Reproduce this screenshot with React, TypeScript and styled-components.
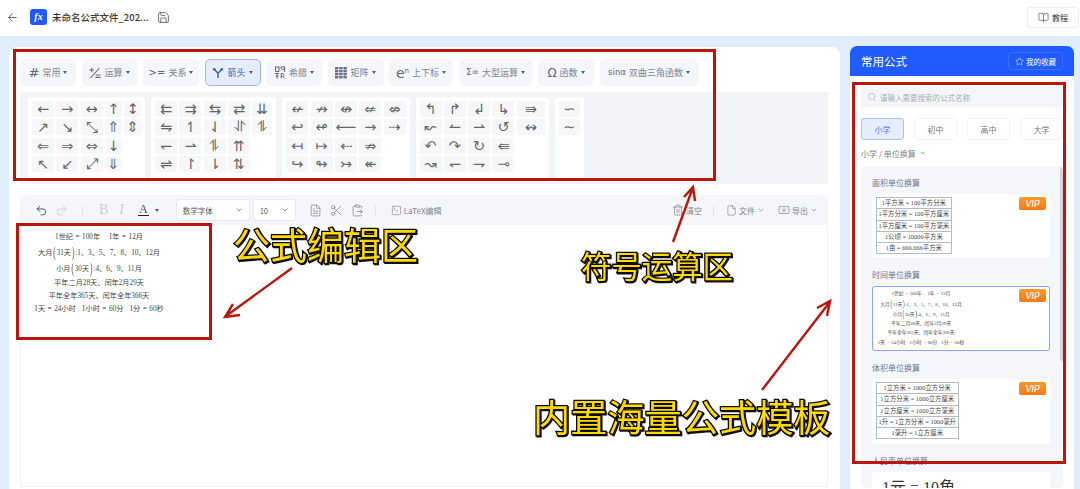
import React from "react";
import styled, { createGlobalStyle } from "styled-components";
import {
  ArrowLeft, Save, BookOpen, Star, Search, ChevronDown, Undo2, Redo2, FileText,
  Scissors, ClipboardPaste, SquareTerminal, Trash2, File, Import,
} from "lucide-react";

const UI = `"Noto Sans CJK SC", "Inter", sans-serif`;
const MATH = `"Liberation Serif", "Noto Sans CJK SC", serif`;

const Global = createGlobalStyle`
  html, body { margin: 0; padding: 0; background: #fff; }
  body { width: 1080px; height: 489px; overflow: hidden; font-family: ${UI}; }
  * { box-sizing: border-box; }
`;

const Page = styled.div`
  position: relative;
  width: 1080px;
  height: 489px;
  overflow: hidden;
  background: #e0eefc;
  display: flex;
  flex-direction: column;
`;

/* ---------- top bar ---------- */
const TopBar = styled.header`
  height: 36px;
  flex: none;
  background: #fff;
  display: flex;
  align-items: center;
  padding: 0 1px 2px 6px;
  color: #555;
`;
const Logo = styled.div`
  width: 17px;
  height: 16px;
  margin-left: 11px;
  border-radius: 3px;
  background: #1f5bff;
  color: #fff;
  font: italic 700 10px/16px "Liberation Serif", serif;
  text-align: center;
`;
const FileName = styled.div`
  margin-left: 5px;
  width: 105px;
  font-size: 9.5px;
  font-weight: 500;
  color: #3a3a3a;
  white-space: nowrap;
`;
const HelpButton = styled.button`
  margin-left: auto;
  width: 52px;
  height: 21px;
  border: 1px solid #eceef2;
  border-radius: 3px;
  background: #fff;
  color: #555;
  font: 500 8px ${UI};
  display: flex;
  align-items: center;
  justify-content: center;
  gap: 3px;
  padding: 0;
`;

/* ---------- main ---------- */
const Main = styled.main`
  flex: 1;
  min-height: 0;
  display: flex;
  gap: 10px;
  padding: 11px 6px 0 9px;
`;
const LeftPanel = styled.section`
  flex: 1;
  min-width: 0;
  background: #fff;
  border-radius: 8px 8px 0 0;
  padding: 12px 12px 2px 11px;
  display: flex;
  flex-direction: column;
`;
const Tabs = styled.div`
  display: flex;
  gap: 5.5px;
  height: 27px;
  flex: none;
`;
const Tab = styled.div<{ $w: number; $active?: boolean }>`
  width: ${(p) => p.$w}px;
  border-radius: 5px;
  background: ${(p) => (p.$active ? "#e6edff" : "#f5f6f9")};
  border: 1px solid ${(p) => (p.$active ? "#9db6fb" : "#f5f6f9")};
  color: ${(p) => (p.$active ? "#3d5fae" : "#7f8494")};
  font-size: 9px;
  display: flex;
  align-items: center;
  justify-content: center;
  gap: 3px;
  white-space: nowrap;
`;
const TabGlyph = styled.span<{ $size?: number }>`
  font: ${(p) => p.$size ?? 11}px "DejaVu Sans", sans-serif;
  color: #5f6579;
  line-height: 1;
  sup { font-size: 0.5em; vertical-align: 0.7em; line-height: 0; }
`;
const Caret = styled.i<{ $gap?: number }>`
  width: 0;
  height: 0;
  margin-left: ${(p) => p.$gap ?? 0}px;
  border-left: 2.5px solid transparent;
  border-right: 2.5px solid transparent;
  border-top: 3px solid #555b70;
`;
const Symbols = styled.div`
  margin-top: 6px;
  height: 92px;
  flex: none;
  background: #f2f4f8;
  padding: 5px 8px 0;
  display: flex;
  gap: 6px;
  overflow: hidden;
`;
const SymbolGroup = styled.div<{ $cols: string }>`
  background: #fff;
  border-radius: 3px;
  height: 84px;
  padding: 4px;
  display: grid;
  grid-template-columns: ${(p) => p.$cols};
  grid-auto-rows: 16px;
  gap: 2.3px;
`;
const SymbolCell = styled.span`
  background: #f6f7f9;
  border-radius: 2px;
  color: #666;
  font: 14.5px/16px "DejaVu Sans", sans-serif;
  text-align: center;
  overflow: hidden;
`;

/* ---------- editor ---------- */
const EditorBar = styled.div`
  margin-top: 11px;
  height: 30px;
  flex: none;
  background: #f4f6fa;
  border-radius: 6px 6px 0 0;
  display: flex;
  align-items: center;
  padding: 0 10px 0 15px;
  color: #7d8391;
`;
const ToolIcon = styled.span<{ $gap?: number; $dim?: boolean }>`
  margin-left: ${(p) => p.$gap ?? 0}px;
  display: inline-flex;
  color: ${(p) => (p.$dim ? "#c4c8d0" : "#7d8391")};
`;
const StyleLetter = styled.span<{ $gap: number; $italic?: boolean }>`
  margin-left: ${(p) => p.$gap}px;
  font: ${(p) => (p.$italic ? "italic" : "normal")} 400 14px "Liberation Serif", serif;
  color: #c9ccd3;
`;
const ColorLetter = styled.span`
  margin-left: 14px;
  font: 400 12px/11px "Liberation Serif", serif;
  color: #44506e;
  border-bottom: 1.5px solid #222;
  padding: 0 1px;
`;
const Divider = styled.i<{ $gap: number }>`
  margin-left: ${(p) => p.$gap}px;
  width: 1px;
  height: 9px;
  background: #dfe2e8;
`;
const SelectBox = styled.div<{ $w: number; $gap: number }>`
  margin-left: ${(p) => p.$gap}px;
  width: ${(p) => p.$w}px;
  height: 22px;
  background: #fff;
  border: 1px solid #e7e9ee;
  border-radius: 3px;
  display: flex;
  align-items: center;
  justify-content: space-between;
  padding: 0 6px;
  font-size: 7.5px;
  color: #555;
`;
const BarLabel = styled.span<{ $gap?: number }>`
  margin-left: ${(p) => p.$gap ?? 2}px;
  font-size: 8px;
  color: #7d8391;
  white-space: nowrap;
`;
const BarRight = styled.div`
  margin-left: auto;
  display: flex;
  align-items: center;
`;
const EditorBody = styled.div`
  flex: 1;
  min-height: 0;
  border: 1px solid #f0f1f4;
  border-top: 0;
  padding: 5px 0 0 8px;
`;

/* ---------- formula ---------- */
const Formula = styled.div<{ $size: number; $w: number }>`
  width: ${(p) => p.$w}px;
  font: ${(p) => p.$size}px ${MATH};
  color: #444;
  text-align: center;
  white-space: nowrap;
`;
const FormulaLine = styled.div<{ $h: number }>`
  line-height: ${(p) => p.$h}em;
  height: ${(p) => p.$h}em;
`;
const Paren = styled.span`
  display: inline-block;
  font-size: 1.2em;
  line-height: 1;
  margin: 0 0.08em;
  transform: scaleY(1.7);
  color: #666;
`;
const Eq = styled.span`
  margin: 0 0.35em;
`;
const Gap = styled.span<{ $w: number }>`
  display: inline-block;
  width: ${(p) => p.$w}em;
`;

/* ---------- right panel ---------- */
const RightPanel = styled.aside`
  width: 224px;
  flex: none;
  margin-top: -1px;
  background: #fff;
  border-radius: 7px 7px 0 0;
  display: flex;
  flex-direction: column;
`;
const RightHead = styled.div`
  height: 30px;
  flex: none;
  background: #1f5bff;
  border-radius: 7px 7px 0 0;
  display: flex;
  align-items: center;
  justify-content: space-between;
  padding: 0 11px;
  color: #fff;
  font-size: 11.5px;
`;
const FavButton = styled.div`
  width: 55px;
  height: 18px;
  border: 1px solid #3a6dff;
  border-radius: 3px;
  font-size: 7.5px;
  display: flex;
  align-items: center;
  justify-content: center;
  gap: 2px;
`;
const RightBody = styled.div`
  flex: 1;
  min-height: 0;
  padding: 11px 11px 0;
  display: flex;
  flex-direction: column;
`;
const SearchBox = styled.div`
  height: 20px;
  flex: none;
  background: #f4f5f8;
  border-radius: 3px;
  display: flex;
  align-items: center;
  gap: 3px;
  padding: 0 6px;
  font-size: 7.5px;
  color: #a9adb6;
`;
const LevelTabs = styled.div`
  margin-top: 11px;
  display: grid;
  grid-template-columns: repeat(4, 1fr);
  gap: 10px;
  flex: none;
`;
const LevelTab = styled.div<{ $active?: boolean }>`
  height: 22px;
  border-radius: 3px;
  border: 1px solid ${(p) => (p.$active ? "#a9bffc" : "#f2f3f6")};
  background: ${(p) => (p.$active ? "#e6edff" : "#fff")};
  color: ${(p) => (p.$active ? "#5878d8" : "#777")};
  font-size: 8px;
  display: flex;
  align-items: center;
  justify-content: center;
`;
const Crumb = styled.div`
  margin-top: 6px;
  height: 14px;
  flex: none;
  display: flex;
  align-items: center;
  gap: 3px;
  font-size: 8px;
  color: #7b7f8a;
`;
const TemplateList = styled.div`
  position: relative;
  margin-top: 6px;
  flex: 1;
  min-height: 0;
  margin-bottom: 1px;
  background: #f4f6f9;
  border-radius: 5px;
  padding: 8px 13px 0 11px;
  overflow: hidden;
`;
const ScrollThumb = styled.i`
  position: absolute;
  top: 0;
  right: 0;
  width: 3px;
  height: 195px;
  background: #d4d6db;
  border-radius: 2px;
`;
const TemplateTitle = styled.div`
  height: 18px;
  margin-bottom: 2px;
  font-size: 8px;
  line-height: 18px;
  color: #6d7391;
`;
const TemplateCard = styled.div<{ $selected?: boolean; $h?: number }>`
  position: relative;
  height: ${(p) => p.$h ?? 65}px;
  margin-bottom: 8px;
  background: #fff;
  border-radius: 3px;
  border: 1px solid ${(p) => (p.$selected ? "#8aa6f5" : "#fff")};
  padding: ${(p) => (p.$selected ? "2px 0 0 2px" : "2px 0 0 3px")};
`;
const Vip = styled.span`
  position: absolute;
  top: 2px;
  right: 3px;
  width: 27px;
  height: 13px;
  border-radius: 2px;
  background: linear-gradient(180deg, #fb9a2c, #f57a12);
  color: #fff;
  font: italic 500 9px/13px "Inter", sans-serif;
  text-align: center;
`;
const UnitTable = styled.table`
  border-collapse: collapse;
  font: 6.4px/10.3px ${MATH};
  color: #444;
  text-align: center;
  white-space: nowrap;
  td { border: 1px solid #b9babd; padding: 0 1.5px; }
`;
const BigMath = styled.div`
  font: 16px/22px ${MATH};
  color: #333;
  padding: 2px 0 0 6px;
`;

/* ---------- annotations ---------- */
const RedBox = styled.div<{ $x: number; $y: number; $w: number; $h: number }>`
  position: absolute;
  left: ${(p) => p.$x}px;
  top: ${(p) => p.$y}px;
  width: ${(p) => p.$w}px;
  height: ${(p) => p.$h}px;
  border: 3px solid #b9170d;
  pointer-events: none;
`;
const Callout = styled.div<{ $x: number; $y: number; $size: number }>`
  position: absolute;
  left: ${(p) => p.$x}px;
  top: ${(p) => p.$y}px;
  font: 400 ${(p) => p.$size}px/1 "Noto Sans CJK SC", sans-serif;
  color: #ffd900;
  white-space: nowrap;
  -webkit-text-stroke: 2.6px #0c0c0c;
  paint-order: stroke fill;
  filter: drop-shadow(1.5px 1.5px 0 #111);
`;
const ArrowLayer = styled.svg`
  position: absolute;
  left: 0;
  top: 0;
  pointer-events: none;
`;

/* ---------- drawn tab icons ---------- */
const MathOpsIcon = () => (
  <svg width="12" height="12" viewBox="0 0 12 12" fill="none" stroke="#5f6579" strokeWidth="1.1">
    <path d="M0.5 3H5M2.8 0.8V5.2M1.5 11 10.5 1M6.5 8H11.5M6.5 10.4H11.5" />
  </svg>
);
const GreekIcon = () => (
  <svg width="12" height="13" viewBox="0 0 12 13" fill="none" stroke="#5f6579" strokeWidth="1">
    <path d="M1 1H5.4M1.5 1V5.5H5V1M6.6 1H11M7 1.2C7 4.5 10.6 4.5 10.6 1.2V6M1 7.5H5M3 7.5V12.5M2 10H4.5M7.2 7.5V12.5M7.2 7.5C11 7 11 10.5 7.2 10.2M8.8 10.2 10.8 12.5" />
  </svg>
);
const MatrixIcon = () => (
  <svg width="12" height="12" viewBox="0 0 12 12" fill="#6a7081">
    {[0, 3, 6, 9].map((y) =>
      [0, 4.2, 8.4].map((x) => <rect key={`${x}-${y}`} x={x} y={y} width="3.4" height="2.4" />),
    )}
  </svg>
);
const ForkIcon = () => (
  <svg width="12" height="12" viewBox="0 0 12 12" fill="none" stroke="#3d5fae" strokeWidth="1.4">
    <path d="M2.5 2.5 6 6.2M9.5 2.5 6 6.2V11" />
    <circle cx="2.2" cy="2.2" r="1.3" fill="#3d5fae" stroke="none" />
    <circle cx="9.8" cy="2.2" r="1.3" fill="#3d5fae" stroke="none" />
  </svg>
);

/* ---------- data ---------- */
const tabs: { w: number; glyph: React.ReactNode; label: string; active?: boolean }[] = [
  { w: 56, glyph: <TabGlyph $size={13}>#</TabGlyph>, label: "常用" },
  { w: 56, glyph: <MathOpsIcon />, label: "运算" },
  { w: 56, glyph: <TabGlyph $size={10}>&gt;=</TabGlyph>, label: "关系" },
  { w: 56, glyph: <ForkIcon />, label: "箭头", active: true },
  { w: 56, glyph: <GreekIcon />, label: "希腊" },
  { w: 56, glyph: <MatrixIcon />, label: "矩阵" },
  { w: 64, glyph: <TabGlyph $size={14}>e<sup>n</sup></TabGlyph>, label: "上下标" },
  { w: 74, glyph: <TabGlyph $size={9}>Σ∞</TabGlyph>, label: "大型运算" },
  { w: 56, glyph: <TabGlyph $size={12}>Ω</TabGlyph>, label: "函数" },
  { w: 99, glyph: <TabGlyph $size={8.5}>sinα</TabGlyph>, label: "双曲三角函数" },
];

const groups: { cols: string; cells: string[] }[] = [
  { cols: "22px 22px 22px 17px 17px",
    cells: ["←","→","↔","↑","↕","↗","↘","⤡","⇑","⇕","⇐","⇒","⇔","↓","","↖","↙","⤢","⇓",""] },
  { cols: "22px 22px 22px 22px 20px",
    cells: ["⇇","⇉","⇆","⇄","⇊","⇋","↿","⇃","⥯","⥮","↽","⇀","⥮","⇈","","⇌","↾","⇂","⇅",""] },
  { cols: "22px 22px 22px 22px 22px",
    cells: ["↚","↛","↮","⇍","⇎","↩","↫","⟵","→","⇢","↤","↦","⇠","⇏","","↪","↬","↣","↞",""] },
  { cols: "22px 22px 22px 22px 28px",
    cells: ["↰","↱","↲","↳","⇛","↜","↼","⇀","↺","↭","↶","↷","↻","⇚","","↝","↽","⇁","⊸",""] },
  { cols: "21px", cells: ["∽","∼"] },
];

const tableA = ["1平方米 = 100平方分米","1平方分米 = 100平方厘米","1平方厘米 = 100平方毫米","1公顷 = 10000平方米","1亩 = 666.666平方米"];
const tableB = ["1立方米 = 1000立方分米","1立方分米 = 1000立方厘米","1立方厘米 = 1000立方毫米","1升 = 1立方分米 = 1000毫升","1毫升 = 1立方厘米"];

const FormulaText = ({ size, w }: { size: number; w: number }) => (
  <Formula $size={size} $w={w}>
    <FormulaLine $h={2.08}>1世纪<Eq>=</Eq>100年<Gap $w={1.2} />1年<Eq>=</Eq>12月</FormulaLine>
    <FormulaLine $h={2.36}>大月<Paren>(</Paren>31天<Paren>)</Paren>:1、3、5、7、8、10、12月</FormulaLine>
    <FormulaLine $h={2.08}>小月<Paren>(</Paren>30天<Paren>)</Paren>:4、6、9、11月</FormulaLine>
    <FormulaLine $h={1.8}>平年二月28天、闰年2月29天</FormulaLine>
    <FormulaLine $h={1.8}>平年全年365天、闰年全年366天</FormulaLine>
    <FormulaLine $h={1.94}>1天<Eq>=</Eq>24小时<Gap $w={0.85} />1小时<Eq>=</Eq>60分<Gap $w={0.85} />1分<Eq>=</Eq>60秒</FormulaLine>
  </Formula>
);

const Table = ({ rows }: { rows: string[] }) => (
  <UnitTable>
    <tbody>
      {rows.map((r) => (
        <tr key={r}><td>{r}</td></tr>
      ))}
    </tbody>
  </UnitTable>
);

const RedArrow = ({ d }: { d: string }) => (
  <path d={d} fill="none" stroke="#b9170d" strokeWidth="2.4" strokeLinejoin="miter" />
);

export default function App() {
  return (
    <Page>
      <Global />
      <TopBar>
        <ArrowLeft size={13} strokeWidth={1.6} />
        <Logo>fx</Logo>
        <FileName>未命名公式文件_202...</FileName>
        <Save size={13} strokeWidth={1.5} />
        <HelpButton><BookOpen size={11} strokeWidth={1.5} />教程</HelpButton>
      </TopBar>

      <Main>
        <LeftPanel>
          <Tabs>
            {tabs.map((t) => (
              <Tab key={t.label} $w={t.w} $active={t.active}>
                {t.glyph}
                {t.label}
                <Caret />
              </Tab>
            ))}
          </Tabs>
          <Symbols>
            {groups.map((g, i) => (
              <SymbolGroup key={i} $cols={g.cols}>
                {g.cells.map((c, j) => (c ? <SymbolCell key={j}>{c}</SymbolCell> : <span key={j} />))}
              </SymbolGroup>
            ))}
          </Symbols>

          <EditorBar>
            <ToolIcon><Undo2 size={13} strokeWidth={1.7} color="#44506e" /></ToolIcon>
            <ToolIcon $gap={7} $dim><Redo2 size={13} strokeWidth={1.5} /></ToolIcon>
            <Divider $gap={14} />
            <StyleLetter $gap={16}>B</StyleLetter>
            <StyleLetter $gap={11} $italic>I</StyleLetter>
            <ColorLetter>A</ColorLetter>
            <Caret $gap={6} />
            <SelectBox $w={74} $gap={17}>数学字体<ChevronDown size={8} /></SelectBox>
            <SelectBox $w={43} $gap={3}>10<ChevronDown size={8} /></SelectBox>
            <ToolIcon $gap={13}><FileText size={13} strokeWidth={1.4} /></ToolIcon>
            <ToolIcon $gap={8}><Scissors size={13} strokeWidth={1.4} /></ToolIcon>
            <ToolIcon $gap={8}><ClipboardPaste size={13} strokeWidth={1.4} /></ToolIcon>
            <Divider $gap={11} />
            <ToolIcon $gap={15}><SquareTerminal size={11} strokeWidth={1.4} /></ToolIcon>
            <BarLabel>LaTeX编辑</BarLabel>
            <BarRight>
              <ToolIcon><Trash2 size={12} strokeWidth={1.4} /></ToolIcon>
              <BarLabel>清空</BarLabel>
              <Divider $gap={11} />
              <ToolIcon $gap={12}><File size={11} strokeWidth={1.4} /></ToolIcon>
              <BarLabel>文件</BarLabel>
              <ToolIcon $gap={2}><ChevronDown size={8} /></ToolIcon>
              <ToolIcon $gap={13}><Import size={12} strokeWidth={1.4} /></ToolIcon>
              <BarLabel>导出</BarLabel>
              <ToolIcon $gap={2}><ChevronDown size={8} /></ToolIcon>
            </BarRight>
          </EditorBar>
          <EditorBody>
            <FormulaText size={7.2} w={140} />
          </EditorBody>
        </LeftPanel>

        <RightPanel>
          <RightHead>
            常用公式
            <FavButton><Star size={9} strokeWidth={1.4} />我的收藏</FavButton>
          </RightHead>
          <RightBody>
            <SearchBox><Search size={10} strokeWidth={1.4} />请输入需要搜索的公式名称</SearchBox>
            <LevelTabs>
              <LevelTab $active>小学</LevelTab>
              <LevelTab>初中</LevelTab>
              <LevelTab>高中</LevelTab>
              <LevelTab>大学</LevelTab>
            </LevelTabs>
            <Crumb>小学 / 单位换算 <ChevronDown size={8} /></Crumb>
            <TemplateList>
              <ScrollThumb />
              <TemplateTitle>面积单位换算</TemplateTitle>
              <TemplateCard $h={64}>
                <Table rows={tableA} />
                <Vip>VIP</Vip>
              </TemplateCard>
              <TemplateTitle>时间单位换算</TemplateTitle>
              <TemplateCard $selected>
                <FormulaText size={4.8} w={92} />
                <Vip>VIP</Vip>
              </TemplateCard>
              <TemplateTitle>体积单位换算</TemplateTitle>
              <TemplateCard>
                <Table rows={tableB} />
                <Vip>VIP</Vip>
              </TemplateCard>
              <TemplateTitle>人民币单位换算</TemplateTitle>
              <TemplateCard>
                <BigMath>1元 = 10角</BigMath>
              </TemplateCard>
            </TemplateList>
          </RightBody>
        </RightPanel>
      </Main>

      <RedBox $x={13} $y={49} $w={703} $h={132} />
      <RedBox $x={16} $y={223} $w={196} $h={117} />
      <RedBox $x={852} $y={82} $w={214} $h={382} />

      <ArrowLayer width="1080" height="489" viewBox="0 0 1080 489">
        <RedArrow d="M292 268 226 316M240 315 225 317 233 304" />
        <RedArrow d="M673 242 692 190M684 197 693 187 695 201" />
        <RedArrow d="M762 390 829 303M817 308 830 301 827 316" />
      </ArrowLayer>

      <Callout $x={233} $y={226} $size={37}>公式编辑区</Callout>
      <Callout $x={581} $y={250} $size={30.4}>符号运算区</Callout>
      <Callout $x={533} $y={398} $size={37.2}>内置海量公式模板</Callout>
    </Page>
  );
}
